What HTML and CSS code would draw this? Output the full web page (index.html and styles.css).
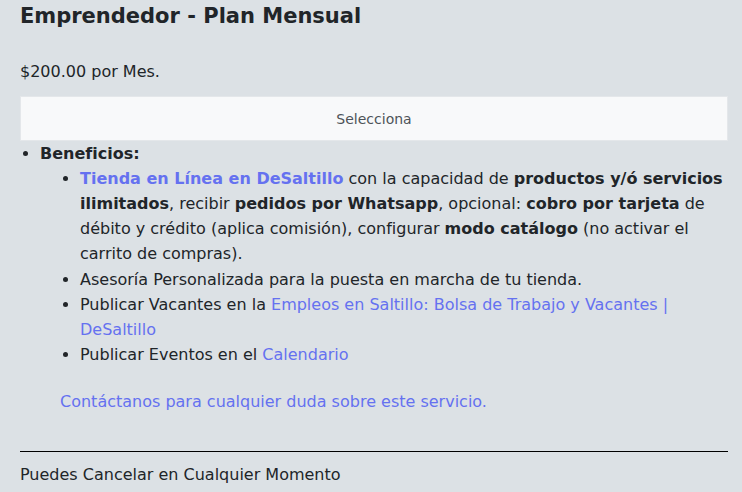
FILE: index.html
```html
<!DOCTYPE html>
<html lang="es">
<head>
    <meta charset="UTF-8">
    <meta name="viewport" content="width=device-width, initial-scale=1.0">
    <title>Emprendedor - Plan Mensual</title>
    <link rel="stylesheet" href="styles.css">
</head>
<body>
    <div class="plan-card">
        <h3 class="plan-title">Emprendedor - Plan Mensual</h3>
        <p class="plan-price">$200.00 por Mes.</p>
        <button class="select-btn">Selecciona</button>

        <ul class="benefits">
            <li>
                <strong>Beneficios:</strong>
                <ul class="benefit-list">
                    <li class="store-item"><a href="#"><strong>Tienda en Línea en DeSaltillo</strong></a> con la capacidad de <strong>productos y/ó servicios ilimitados</strong>, recibir <strong>pedidos por Whatsapp</strong>, opcional: <strong>cobro por tarjeta</strong> de débito y crédito (aplica comisión), configurar <strong>modo catálogo</strong> (no activar el carrito de compras).</li>
                    <li>Asesoría Personalizada para la puesta en marcha de tu tienda.</li>
                    <li>Publicar Vacantes en la <a href="#">Empleos en Saltillo: Bolsa de Trabajo y Vacantes | DeSaltillo</a></li>
                    <li>Publicar Eventos en el <a href="#">Calendario</a></li>
                </ul>
                <p class="contact"><a href="#">Contáctanos para cualquier duda sobre este servicio.</a></p>
            </li>
        </ul>

        <hr class="divider">
        <p class="cancel-note">Puedes Cancelar en Cualquier Momento</p>
    </div>
</body>
</html>
```

FILE: styles.css
```css
body {
    margin: 0;
    background-color: #dce1e5;
    color: #212529;
    font-family: "DejaVu Sans", Verdana, sans-serif;
    font-size: 16px;
    line-height: 25px;
    overflow: hidden;
}

.plan-card {
    padding: 4px 14px 0 20px;
}

.plan-title {
    margin: 0;
    font-size: 21px;
    line-height: 25px;
    font-weight: 700;
}

.plan-price {
    margin: 30px 0 12px;
}

.select-btn {
    display: block;
    width: 100%;
    height: 45px;
    background-color: #f8f9fa;
    border: 1px solid #e4e7ea;
    border-radius: 0;
    color: #4d5358;
    font-family: inherit;
    font-size: 14px;
    cursor: pointer;
}

.benefits {
    margin: 0;
    padding-left: 20px;
}

.benefit-list {
    margin: 0;
    padding-left: 40px;
    list-style-type: disc;
}

.store-item {
    margin-bottom: 1px;
}

.benefits a {
    color: #6571f0;
    text-decoration: none;
}

.contact {
    margin: 22px 0 0;
    padding-left: 20px;
}

.divider {
    margin: 37px 0 10px;
    border: none;
    border-top: 1px solid #000;
}

.cancel-note {
    margin: 0;
}
```
